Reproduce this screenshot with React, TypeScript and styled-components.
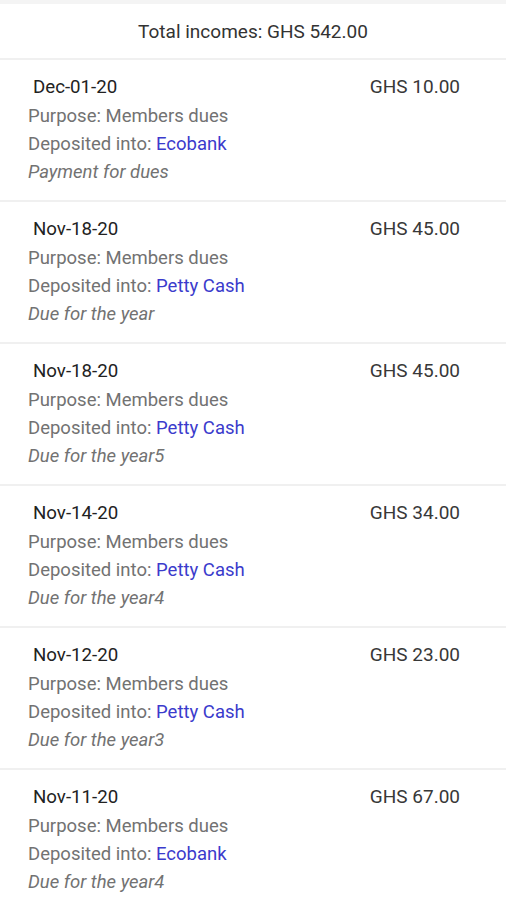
import React from "react";
import styled, { createGlobalStyle } from "styled-components";

const Global = createGlobalStyle`
  html, body { margin: 0; padding: 0; background: #ffffff; }
  body { font-family: Roboto, "Noto Sans", Arial, sans-serif; }
`;

const Page = styled.div`
  width: 506px;
  min-height: 900px;
  background: #ffffff;
  border-top: 4px solid #f4f4f4;
  box-sizing: border-box;
`;

const Header = styled.div`
  height: 54px;
  display: flex;
  align-items: center;
  justify-content: center;
  font-size: 19px;
  color: #333333;
  border-bottom: 2px solid #f0f0f0;
`;

const Card = styled.div`
  height: 142px;
  box-sizing: border-box;
  padding: 13px 46px 0 28px;
  border-bottom: 2px solid #f0f0f0;
  display: flex;
  flex-direction: column;
`;

const TopRow = styled.div`
  display: flex;
  justify-content: space-between;
  align-items: flex-start;
  height: 29px;
  line-height: 28px;
`;

const DateText = styled.span`
  padding-left: 5px;
  font-size: 18.7px;
  color: #222222;
`;

const Amount = styled.span`
  font-size: 19px;
  color: #383838;
`;

const Line = styled.div<{ $italic?: boolean }>`
  height: 28px;
  line-height: 28px;
  font-size: 18.5px;
  color: #727272;
  font-style: ${(p) => (p.$italic ? "italic" : "normal")};
`;

const Account = styled.span`
  color: #3b3bcc;
`;

const items = [
  { date: "Dec-01-20", amount: "GHS 10.00", account: "Ecobank", note: "Payment for dues" },
  { date: "Nov-18-20", amount: "GHS 45.00", account: "Petty Cash", note: "Due for the year" },
  { date: "Nov-18-20", amount: "GHS 45.00", account: "Petty Cash", note: "Due for the year5" },
  { date: "Nov-14-20", amount: "GHS 34.00", account: "Petty Cash", note: "Due for the year4" },
  { date: "Nov-12-20", amount: "GHS 23.00", account: "Petty Cash", note: "Due for the year3" },
  { date: "Nov-11-20", amount: "GHS 67.00", account: "Ecobank", note: "Due for the year4" },
];

export default function App() {
  return (
    <>
      <Global />
      <Page>
        <Header>Total incomes: GHS 542.00</Header>
        {items.map((it, i) => (
          <Card key={i}>
            <TopRow>
              <DateText>{it.date}</DateText>
              <Amount>{it.amount}</Amount>
            </TopRow>
            <Line>Purpose: Members dues</Line>
            <Line>
              Deposited into: <Account>{it.account}</Account>
            </Line>
            <Line $italic>{it.note}</Line>
          </Card>
        ))}
      </Page>
    </>
  );
}
